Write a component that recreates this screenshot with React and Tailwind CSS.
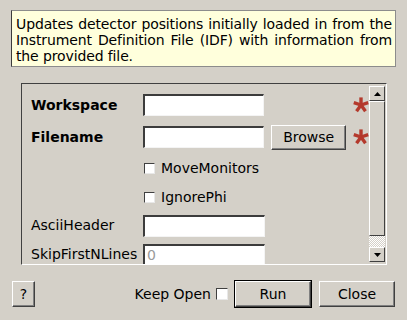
import React from 'react'

const font = { fontFamily: '"DejaVu Sans", Verdana, sans-serif' }

function Star() {
  // red mandatory-field marker
  const arms = [0, 72, 144, 216, 288]
  return (
    <svg width="16" height="16" viewBox="-8 -8 16 16">
      {arms.map(a => (
        <line key={a} x1="0" y1="0" x2="0" y2="-7.6" stroke="#b4392c" strokeWidth="3.4" strokeLinecap="butt" transform={`rotate(${a})`} />
      ))}
    </svg>
  )
}

function Input({ placeholder }) {
  return (
    <div className="w-[122px] h-[22px] bg-white border-t-2 border-l-2 border-t-[#3c3c3c] border-l-[#3c3c3c] border-b border-r border-b-[#f4f4f4] border-r-[#f4f4f4] flex items-center pl-[2px] text-[14px] text-[#9a9a9a]">
      {placeholder}
    </div>
  )
}

function Button({ children, className = '' }) {
  return (
    <div className={`flex items-center justify-center bg-[#d4d0c8] border border-t-white border-l-white border-b-[#404040] border-r-[#404040] shadow-[inset_-1px_-1px_0_#808080] text-[14px] text-black ${className}`}>
      {children}
    </div>
  )
}

function Check({ label }) {
  return (
    <div className="flex items-center">
      <div className="w-[11px] h-[11px] bg-white border-t border-l border-t-[#404040] border-l-[#404040] border-b border-r border-b-[#e8e8e8] border-r-[#e8e8e8] ml-[1px]" />
      <span className="ml-[6px] text-[14px]">{label}</span>
    </div>
  )
}

function Row({ h, label, bold, children }) {
  return (
    <div className={`flex items-center ${h}`}>
      <div className={`w-[112px] text-[14px] ${bold ? 'font-bold' : ''}`}>{label}</div>
      {children}
    </div>
  )
}

export default function App() {
  return (
    <div className="w-[407px] h-[320px] bg-[#d4d0c8] text-black overflow-hidden" style={font}>
      <div className="pt-[10px] px-[11px]">
        <div className="h-[57px] bg-[#ffffdc] border border-[#8c8c8c] border-l-[#3c3c3c] pl-[4px] pr-[3px] pt-[5px] text-[14px] tracking-[-0.12px] leading-[16px] text-justify">
          Updates detector positions initially loaded in from the Instrument Definition File (IDF) with information from the provided file.
        </div>
      </div>

      <div className="ml-[21px] mt-[16px] w-[366px] h-[182px] flex border-t border-l border-t-[#404040] border-l-[#404040] border-b border-r border-b-white border-r-white">
        <div className="flex-1 overflow-hidden pl-[9px] pt-[5px]">
          <Row h="h-[32px]" label="Workspace" bold>
            <Input />
            <div className="ml-[89px]"><Star /></div>
          </Row>
          <Row h="h-[32px]" label="Filename" bold>
            <Input />
            <Button className="ml-[7px] w-[75px] h-[25px]">Browse</Button>
            <div className="ml-[7px]"><Star /></div>
          </Row>
          <Row h="h-[30px]" label="">
            <Check label="MoveMonitors" />
          </Row>
          <Row h="h-[28px]" label="">
            <Check label="IgnorePhi" />
          </Row>
          <Row h="h-[29px]" label="AsciiHeader">
            <Input />
          </Row>
          <Row h="h-[29px]" label="SkipFirstNLines">
            <Input placeholder="0" />
          </Row>
        </div>

        <div className="w-[16px] mr-[1px] pt-[2px] pb-[2px] flex flex-col">
          <div className="h-[15px] flex items-center justify-center bg-[#d4d0c8] border border-t-white border-l-white border-b-[#404040] border-r-[#404040]">
            <svg width="7" height="4" viewBox="0 0 7 4"><path d="M3.5 0 L7 4 L0 4 Z" fill="#000" /></svg>
          </div>
          <div className="h-[135px] bg-[#d4d0c8] border border-t-white border-l-white border-b-[#404040] border-r-[#404040]" />
          <div className="flex-1 bg-[repeating-conic-gradient(#ffffff_0_25%,#d4d0c8_0_50%)] bg-[length:2px_2px]" />
          <div className="h-[15px] flex items-center justify-center bg-[#d4d0c8] border border-t-white border-l-white border-b-[#404040] border-r-[#404040]">
            <svg width="7" height="4" viewBox="0 0 7 4"><path d="M0 0 L7 0 L3.5 4 Z" fill="#000" /></svg>
          </div>
        </div>
      </div>

      <div className="flex items-center mt-[15px] px-[12px]">
        <Button className="w-[23px] h-[26px]">?</Button>
        <div className="flex-1" />
        <span className="text-[14px]">Keep Open</span>
        <div className="ml-[5px] w-[12px] h-[12px] bg-white border-t border-l border-t-[#404040] border-l-[#404040] border-b border-r border-b-[#e8e8e8] border-r-[#e8e8e8]" />
        <div className="ml-[6px] border border-black">
          <Button className="w-[76px] h-[26px]">Run</Button>
        </div>
        <Button className="ml-[7px] w-[76px] h-[26px]">Close</Button>
      </div>
    </div>
  )
}
